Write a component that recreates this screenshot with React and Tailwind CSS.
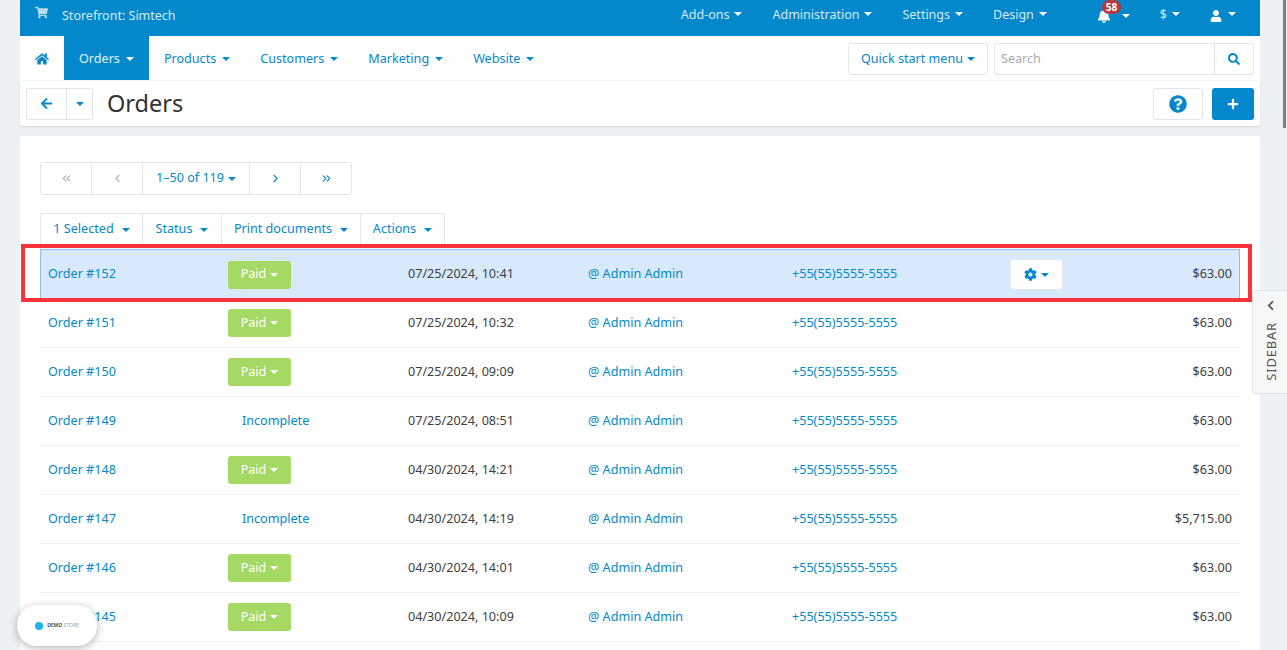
import React from 'react';
import { FaShoppingCart, FaHome, FaBell, FaUser, FaArrowLeft, FaQuestionCircle, FaPlus, FaSearch, FaCog, FaChevronLeft } from 'react-icons/fa';
import { ChevronLeft, ChevronRight, ChevronsLeft, ChevronsRight } from 'lucide-react';

const Caret = ({ className = '' }) => (
  <span className={`inline-block w-0 h-0 border-x-[4px] border-x-transparent border-t-[4px] ${className}`}></span>
);

const orders = [
  { id: 152, paid: true, date: '07/25/2024, 10:41', total: '$63.00', selected: true },
  { id: 151, paid: true, date: '07/25/2024, 10:32', total: '$63.00' },
  { id: 150, paid: true, date: '07/25/2024, 09:09', total: '$63.00' },
  { id: 149, paid: false, date: '07/25/2024, 08:51', total: '$63.00' },
  { id: 148, paid: true, date: '04/30/2024, 14:21', total: '$63.00' },
  { id: 147, paid: false, date: '04/30/2024, 14:19', total: '$5,715.00' },
  { id: 146, paid: true, date: '04/30/2024, 14:01', total: '$63.00' },
  { id: 145, paid: true, date: '04/30/2024, 10:09', total: '$63.00' },
];

const OrderRow = ({ order }) => (
  <div className={`relative flex items-center shrink-0 ${order.selected ? 'h-[50px] bg-[#d8e9fc] border border-b-0 border-[#8fbdee] pl-[7px] pr-[7px]' : 'h-[49px] border-b border-[#eef1f4] pl-2 pr-2'}`}>
    <a className="w-[180px] text-[#0388cc]">Order #{order.id}</a>
    <div className="w-[180px]">
      {order.paid ? (
        <span className="inline-flex items-center gap-1 justify-center w-[63px] h-[28px] rounded-[3px] bg-[#a6d864] text-white">
          Paid <Caret className="border-t-white" />
        </span>
      ) : (
        <span className="pl-[14px] text-[#0388cc]">Incomplete</span>
      )}
    </div>
    <div className="w-[180px] text-[#404040]">{order.date}</div>
    <a className="w-[204px] text-[#0388cc]">@ Admin Admin</a>
    <a className="w-[218px] text-[#0388cc]">+55(55)5555-5555</a>
    <div className="w-[53px]">
      {order.selected && (
        <span className="flex items-center justify-center gap-1 w-[53px] h-[31px] bg-white rounded-[3px] border border-[#e4e9ee] text-[#0388cc]">
          <FaCog className="w-[13px] h-[13px]" /> <Caret className="border-t-[#0388cc]" />
        </span>
      )}
    </div>
    <div className="flex-1 text-right text-[#404040]">{order.total}</div>
  </div>
);

const TopLink = ({ children }) => (
  <span className="flex items-center gap-[5px]">{children}<Caret className="border-t-white -mt-[3px]" /></span>
);

const MenuLink = ({ label }) => (
  <span className="flex items-center gap-[6px] text-[#0388cc]">{label}<Caret className="border-t-[#0388cc]" /></span>
);

export default function App() {
  return (
    <div className="relative flex h-[650px] overflow-hidden bg-[#edf1f4] text-[12.6px]" style={{ fontFamily: '"Noto Sans", sans-serif' }}>
      <div className="flex flex-col w-[1240px] ml-[20px] shrink-0">
        {/* top bar */}
        <div className="flex items-center justify-between h-[36px] bg-[#0388cc] text-[#d5e9f5] text-[12.5px] pl-[15px] pr-[24px] pb-[5px] shrink-0">
          <div className="flex items-center gap-[14px]">
            <FaShoppingCart className="w-[13px] h-[13px] -mt-[6px] text-[#b5dcf0]" />
            <span className="mt-[1px]">Storefront: Simtech</span>
          </div>
          <div className="flex items-center gap-[30px]">
            <TopLink>Add-ons</TopLink>
            <TopLink>Administration</TopLink>
            <TopLink>Settings</TopLink>
            <TopLink>Design</TopLink>
            <span className="flex items-center ml-[20px]">
              <span className="relative">
                <FaBell className="w-[14px] h-[14px] text-white" />
                <span className="absolute -top-[9px] left-[5px] bg-[#b53a3e] text-white text-[10px] font-bold leading-[14px] rounded-full px-[4px]">58</span>
              </span>
              <span className="ml-[11px] -mt-[3px]"><Caret className="border-t-white block" /></span>
            </span>
            <span className="flex items-center gap-[5px]">$<Caret className="border-t-white -mt-[3px]" /></span>
            <span className="flex items-center gap-[6px]"><FaUser className="w-[12px] h-[12px] text-white" /><Caret className="border-t-white -mt-[3px]" /></span>
          </div>
        </div>

        {/* main menu */}
        <div className="flex items-center justify-between h-[45px] bg-white border-b border-[#f2f4f6] pr-[6px] shrink-0">
          <div className="flex items-center h-full">
            <span className="flex items-center justify-center w-[44px] h-full pt-[2px] text-[#0388cc]"><FaHome className="w-[14px] h-[14px]" /></span>
            <span className="flex items-center gap-[6px] h-full px-[15px] pt-[2px] bg-[#0388cc] text-[#e3f1f9]">Orders<Caret className="border-t-white" /></span>
            <div className="flex items-center gap-[30px] ml-[15px] pt-[2px]">
              <MenuLink label="Products" />
              <MenuLink label="Customers" />
              <MenuLink label="Marketing" />
              <MenuLink label="Website" />
            </div>
          </div>
          <div className="flex items-center gap-[6px] pt-[2px]">
            <span className="flex items-center justify-center gap-1 w-[140px] h-[32px] rounded-[3px] border border-[#dfe5ea] text-[#0388cc]">Quick start menu<Caret className="border-t-[#0388cc]" /></span>
            <div className="flex h-[32px] w-[260px] rounded-[3px] border border-[#dfe5ea]">
              <span className="flex-1 flex items-center px-[6px] text-[#a9a9a9]">Search</span>
              <span className="flex items-center justify-center w-[39px] border-l border-[#dfe5ea] text-[#0388cc]"><FaSearch className="w-[12px] h-[12px]" /></span>
            </div>
          </div>
        </div>

        {/* title bar */}
        <div className="flex items-center justify-between h-[45px] bg-white rounded-b-[3px] shadow-[0_1px_2px_rgba(0,0,0,0.12)] px-[6px] shrink-0">
          <div className="flex items-center gap-[14px]">
            <div className="flex h-[32px] rounded-[3px] border border-[#dfe5ea] text-[#0388cc]">
              <span className="flex items-center justify-center w-[40px] border-r border-[#dfe5ea]"><FaArrowLeft className="w-[13px] h-[13px]" /></span>
              <span className="flex items-center justify-center w-[25px]"><Caret className="border-t-[#0388cc]" /></span>
            </div>
            <span className="text-[23.5px] leading-none text-[#333]">Orders</span>
          </div>
          <div className="flex items-center gap-[9px]">
            <span className="flex items-center justify-center w-[50px] h-[32px] rounded-[3px] border border-[#dfe5ea] text-[#0388cc]"><FaQuestionCircle className="w-[18px] h-[18px]" /></span>
            <span className="flex items-center justify-center w-[42px] h-[32px] rounded-[3px] bg-[#0388cc] text-white"><FaPlus className="w-[12px] h-[12px]" /></span>
          </div>
        </div>

        {/* content */}
        <div className="flex flex-col flex-1 mt-[10px] bg-white rounded-t-[3px] px-[20px] pt-[26px] min-h-0 overflow-hidden">
          <div className="flex h-[33px] w-[312px] rounded-[3px] border border-[#dfe5ea] text-[#0388cc] shrink-0">
            <span className="flex items-center justify-center w-[51px] border-r border-[#dfe5ea] text-[#aab2b8]"><ChevronsLeft className="w-[13px] h-[13px]" /></span>
            <span className="flex items-center justify-center w-[51px] border-r border-[#dfe5ea] text-[#aab2b8]"><ChevronLeft className="w-[13px] h-[13px]" /></span>
            <span className="flex items-center justify-center gap-1 w-[107px] border-r border-[#dfe5ea]">1–50 of 119<Caret className="border-t-[#0388cc]" /></span>
            <span className="flex items-center justify-center w-[51px] border-r border-[#dfe5ea]"><ChevronRight className="w-[13px] h-[13px]" /></span>
            <span className="flex items-center justify-center flex-1"><ChevronsRight className="w-[13px] h-[13px]" /></span>
          </div>
          <div className="flex h-[32px] w-[405px] mt-[18px] rounded-t-[3px] border border-b-0 border-[#dfe5ea] text-[#0388cc] shrink-0">
            <span className="flex items-center justify-center gap-2 w-[102px] border-r border-[#dfe5ea]">1 Selected<Caret className="border-t-[#0388cc]" /></span>
            <span className="flex items-center justify-center gap-2 w-[79px] border-r border-[#dfe5ea]">Status<Caret className="border-t-[#0388cc]" /></span>
            <span className="flex items-center justify-center gap-2 w-[139px] border-r border-[#dfe5ea]">Print documents<Caret className="border-t-[#0388cc]" /></span>
            <span className="flex items-center justify-center gap-2 flex-1">Actions<Caret className="border-t-[#0388cc]" /></span>
          </div>
          <div className="flex flex-col mt-[4px]">
            {orders.map(o => <OrderRow key={o.id} order={o} />)}
          </div>
        </div>
      </div>

      {/* red annotation frame */}
      <div className="absolute left-[21px] top-[244px] w-[1231px] h-[58px] border-[4px] border-[#f6323a] pointer-events-none"></div>

      {/* sidebar tab */}
      <div className="absolute left-[1252px] top-[290px] flex flex-col items-center w-[36px] h-[104px] pt-[9px] bg-[#f7f7f7] border border-[#e2e5e8] rounded-l-[3px] text-[#555]">
        <FaChevronLeft className="w-[11px] h-[11px]" />
        <span className="mt-[11px] ml-[3px] text-[13px] tracking-[0.8px] [writing-mode:vertical-rl] rotate-180">SIDEBAR</span>
      </div>

      {/* demo store pill */}
      <div className="absolute left-[17px] top-[605px] flex items-center justify-center gap-[4px] w-[80px] h-[41px] rounded-[20px] bg-white shadow-[0_2px_8px_rgba(0,0,0,0.3)]">
        <span className="w-[8px] h-[8px] rounded-full bg-[#19b5e8]"></span>
        <span className="text-[5px] font-bold text-[#555]">DEMO <span className="font-normal text-[#999]">STORE</span></span>
      </div>

      {/* scrollbar */}
      <div className="flex-1 flex justify-end">
        <div className="w-[3px] h-[128px] bg-[#808080] mr-[1px]"></div>
      </div>
    </div>
  );
}
